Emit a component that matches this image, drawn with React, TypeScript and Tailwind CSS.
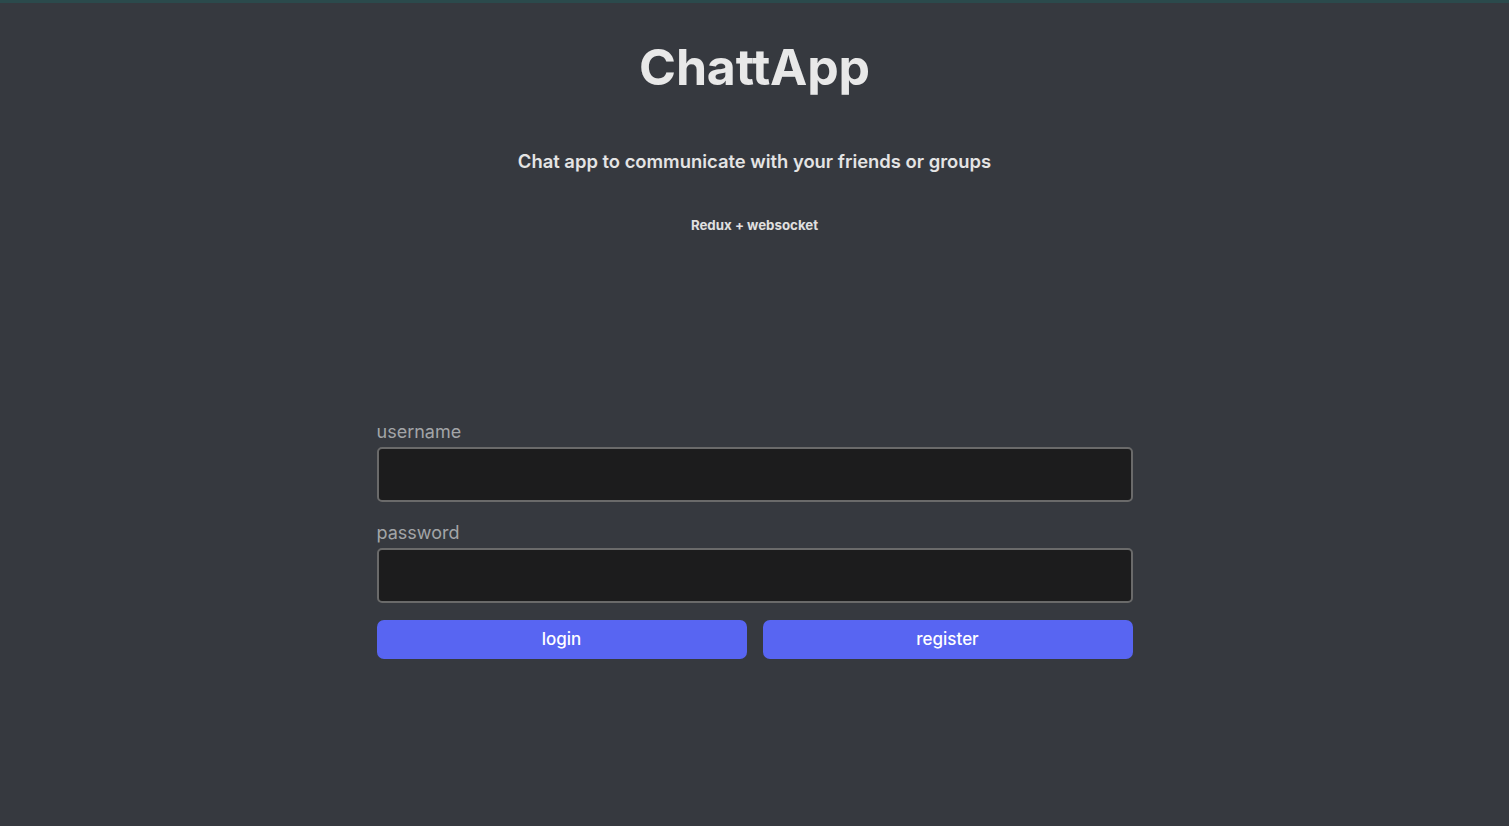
import React from "react";

export default function App() {
  return (
    <div className="min-h-screen w-full bg-[#36393f] flex flex-col" style={{ fontFamily: "Inter, 'Noto Sans', sans-serif" }}>
      <div className="h-[3px] w-full bg-[#2b4a4c]" />
      <div className="flex flex-col items-center">
        <h1 className="mt-[39px] text-[50px] leading-[50px] font-bold text-[#e8e8e8] tracking-[-0.2px]">ChattApp</h1>
        <h2 className="mt-[57px] text-[18.4px] leading-[24px] font-semibold text-[#e4e4e4]">
          Chat app to communicate with your friends or groups
        </h2>
        <h4 className="mt-[42px] text-[13.3px] leading-[20px] font-bold text-[#e0e0e0]">Redux + websocket</h4>
      </div>
      <form className="mx-auto mt-[185px] w-[756px] flex flex-col">
        <label className="text-[18px] leading-[24px] text-[#a3a5a8]">username</label>
        <input
          type="text"
          className="mt-[3px] h-[55px] w-full rounded-[5px] border-2 border-[#6a6a6a] bg-[#1c1c1d] px-3 text-white outline-none"
        />
        <label className="mt-[19px] text-[18px] leading-[24px] text-[#a3a5a8]">password</label>
        <input
          type="password"
          className="mt-[3px] h-[55px] w-full rounded-[5px] border-2 border-[#6a6a6a] bg-[#1c1c1d] px-3 text-white outline-none"
        />
        <div className="mt-[17px] grid grid-cols-2 gap-4">
          <button type="button" className="h-[39px] rounded-[7px] bg-[#5865f2] text-[17px] font-medium text-white">login</button>
          <button type="button" className="h-[39px] rounded-[7px] bg-[#5865f2] text-[17px] font-medium text-white">register</button>
        </div>
      </form>
    </div>
  );
}
